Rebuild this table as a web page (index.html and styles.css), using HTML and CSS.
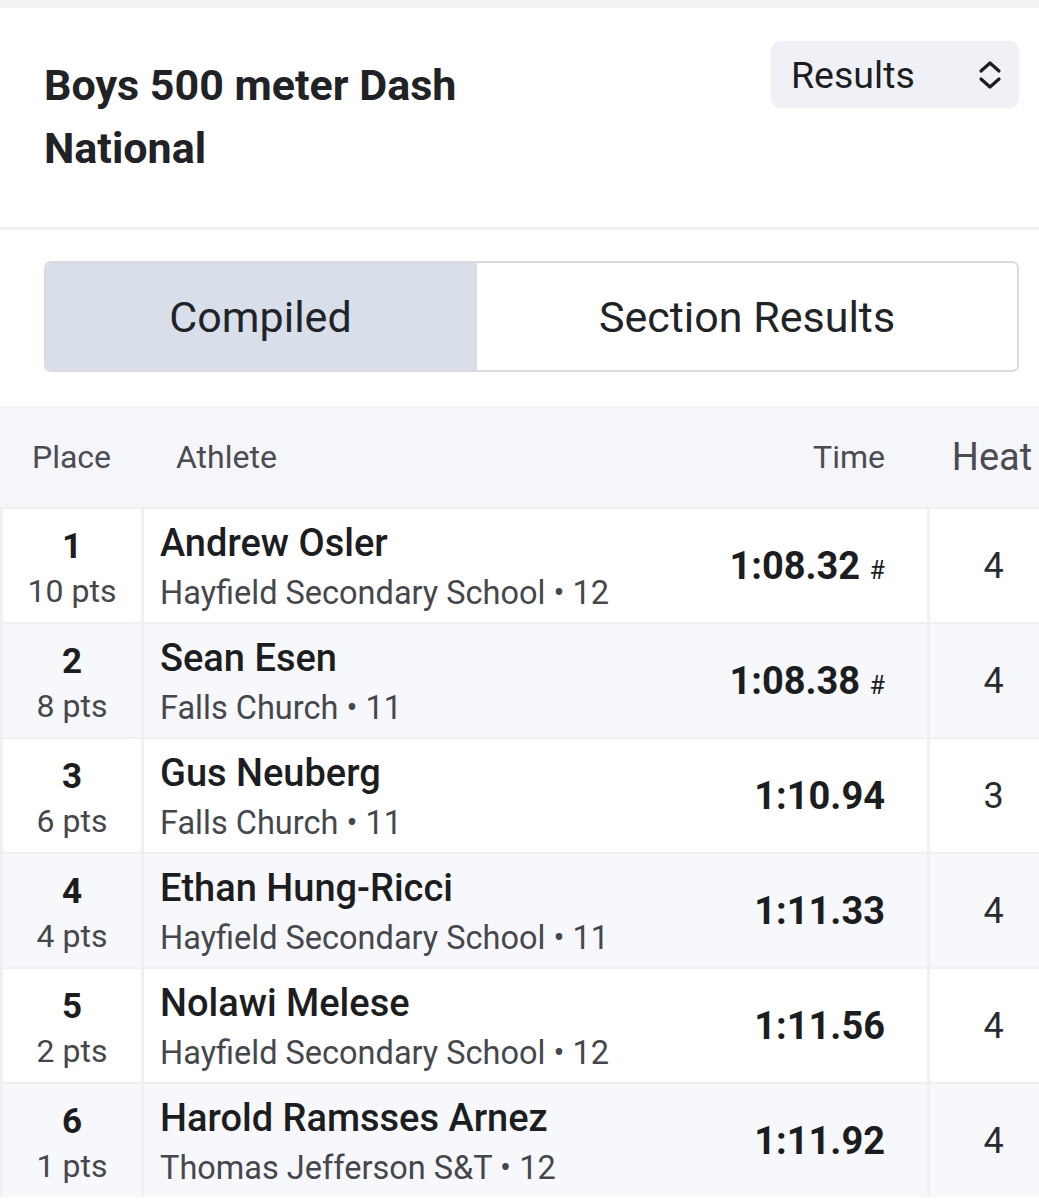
FILE: index.html
```html
<!DOCTYPE html>
<html>
    <head>
        <title>Boys 500 meter Dash National</title>
        <link rel="stylesheet" href="styles.css">
    </head>
    <body>

        <div class="top-strip"></div>

        <!-- Event header -->
        <div class="event-header">
            <h1 class="event-title">Boys 500 meter Dash<br>National</h1>
            <div class="view-select">
                <span>Results</span>
                <svg width="26" height="30" viewBox="0 0 26 30">
                    <path d="M4 11 L13 3 L22 11 M4 19 L13 27 L22 19" fill="none" stroke="#1c1d21" stroke-width="3.2" stroke-linecap="round" stroke-linejoin="round"/>
                </svg>
            </div>
        </div>

        <!-- Compiled / Section toggle -->
        <div class="toggle-area">
            <div class="segmented">
                <div class="segment active">Compiled</div>
                <div class="segment">Section Results</div>
            </div>
        </div>

        <!-- Results table -->
        <div class="results">
            <div class="results-head">
                <div class="col-place">Place</div>
                <div class="col-main">
                    <span>Athlete</span>
                    <span>Time</span>
                </div>
                <div class="col-heat">Heat</div>
            </div>
            <div class="results-body" id="resultsBody"></div>
        </div>

        <script>
            const results = [
                { place: 1, pts: 10, name: "Andrew Osler", school: "Hayfield Secondary School", grade: 12, time: "1:08.32", mark: "#", heat: 4 },
                { place: 2, pts: 8, name: "Sean Esen", school: "Falls Church", grade: 11, time: "1:08.38", mark: "#", heat: 4 },
                { place: 3, pts: 6, name: "Gus Neuberg", school: "Falls Church", grade: 11, time: "1:10.94", mark: "", heat: 3 },
                { place: 4, pts: 4, name: "Ethan Hung-Ricci", school: "Hayfield Secondary School", grade: 11, time: "1:11.33", mark: "", heat: 4 },
                { place: 5, pts: 2, name: "Nolawi Melese", school: "Hayfield Secondary School", grade: 12, time: "1:11.56", mark: "", heat: 4 },
                { place: 6, pts: 1, name: "Harold Ramsses Arnez", school: "Thomas Jefferson S&T", grade: 12, time: "1:11.92", mark: "", heat: 4 }
            ];

            const body = document.getElementById("resultsBody");

            results.forEach((r, i) => {
                const row = document.createElement("div");
                row.className = "result-row" + (i % 2 === 1 ? " alt" : "");
                const mark = r.mark ? ` <span class="mark">${r.mark}</span>` : "";
                row.innerHTML = `
                    <div class="cell place-cell">
                        <div class="place-num">${r.place}</div>
                        <div class="place-pts">${r.pts} pts</div>
                    </div>
                    <div class="cell main-cell">
                        <div class="athlete">
                            <div class="athlete-name">${r.name}</div>
                            <div class="athlete-school">${r.school.replace("&", "&amp;")} • ${r.grade}</div>
                        </div>
                        <div class="time">${r.time}${mark}</div>
                    </div>
                    <div class="cell heat-cell">${r.heat}</div>
                `;
                body.appendChild(row);
            });
        </script>
    </body>
</html>
```

FILE: styles.css
```css
/* Page */
body {
margin: 0;
padding: 0;
font-family: Roboto, "Liberation Sans", Arial, sans-serif;
color: #1c1d21;
background-color: #fff;
width: 1039px;
overflow: hidden;
}

.top-strip {
height: 8px;
background-color: #f2f2f4;
}

/* Event header */
.event-header {
display: flex;
justify-content: space-between;
align-items: flex-start;
padding: 33px 20px 0 44px;
height: 186px;
border-bottom: 3px solid #eff0f2;
}

.event-title {
margin: 13px 0 0 0;
font-size: 43px;
line-height: 63px;
font-weight: 700;
color: #212226;
}

.view-select {
display: flex;
align-items: center;
justify-content: space-between;
box-sizing: border-box;
width: 248px;
height: 67px;
padding: 0 16px 0 20px;
background-color: #f0f1f6;
border-radius: 9px;
font-size: 37.5px;
color: #1c1d21;
}

/* Toggle */
.toggle-area {
padding: 31px 20px 34px 44px;
}

.segmented {
display: flex;
height: 111px;
box-sizing: border-box;
border: 2px solid #d9dbe0;
border-radius: 7px;
overflow: hidden;
}

.segment {
flex: 1;
display: flex;
align-items: center;
justify-content: center;
font-size: 43px;
color: #222327;
background-color: #fff;
}

.segment.active {
flex: 0 0 429px;
background-color: #d8deea;
border-right: 2px solid #d9dbe0;
}

/* Results table */
.results {
width: 1070px;
background-color: #eff0f3;
}

.results-head {
display: grid;
grid-template-columns: 141px 786px 143px;
height: 101px;
align-items: center;
background-color: #f5f6fa;
font-size: 32px;
color: #4a4c52;
}

.results-head .col-place {
text-align: center;
padding-left: 2px;
}

.results-head .col-main {
display: flex;
justify-content: space-between;
padding: 0 42px 0 35px;
}

.results-head .col-heat {
text-align: center;
font-size: 38px;
padding-right: 13px;
}

.results-body {
display: flex;
flex-direction: column;
gap: 2px;
padding-top: 2px;
}

.result-row {
display: grid;
grid-template-columns: 138px 783px 140px;
gap: 3px;
padding-left: 3px;
height: 113px;
}

.cell {
background-color: #fff;
}

.result-row.alt .cell {
background-color: #f7f8fb;
}

.place-cell {
display: flex;
flex-direction: column;
align-items: center;
justify-content: center;
padding-top: 6px;
}

.place-num {
font-size: 35px;
font-weight: 700;
line-height: 45px;
color: #1c1d21;
}

.place-pts {
font-size: 32px;
line-height: 45px;
color: #45474d;
}

.main-cell {
display: flex;
align-items: center;
justify-content: space-between;
padding: 0 42px 0 16px;
}

.athlete {
padding-top: 4px;
}

.athlete-name {
font-size: 38px;
font-weight: 500;
line-height: 50px;
color: #1c1d21;
}

.athlete-school {
font-size: 32.5px;
line-height: 50px;
color: #45474d;
}

.time {
font-size: 38px;
font-weight: 700;
color: #1c1d21;
white-space: nowrap;
}

.time .mark {
font-size: 25px;
font-weight: 400;
}

.heat-cell {
display: flex;
align-items: center;
justify-content: center;
font-size: 36px;
color: #2a2b30;
padding-right: 13px;
}
```
